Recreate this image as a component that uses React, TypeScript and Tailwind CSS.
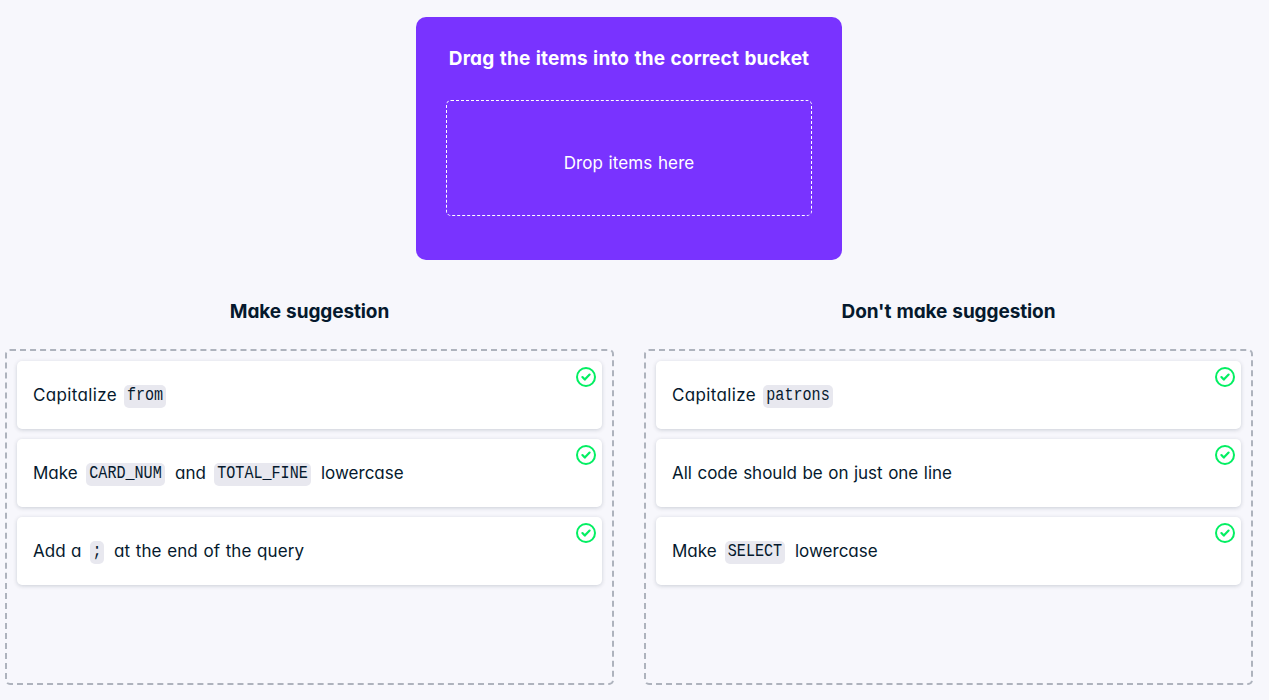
import React from "react";

type Part = { text: string; code?: boolean; className: string };

const CODE =
  "inline-flex h-[23px] items-center justify-center rounded-[5px] bg-[#e8e8ef] font-['Liberation_Mono',monospace] text-[15.1px] leading-none [word-spacing:0]";

const CheckIcon = () => (
  <svg className="absolute top-[6px] right-[6px] size-5" viewBox="0 0 20 20" fill="none" stroke="#03ef62" strokeWidth="2">
    <circle cx="10" cy="10" r="9" />
    <path d="M6.4 10.1l2.4 2.5 4.8-5" strokeWidth="2.2" strokeLinecap="round" strokeLinejoin="round" />
  </svg>
);

function Item({ parts }: { parts: Part[] }) {
  return (
    <div className="relative flex h-[68px] items-center rounded-[5px] bg-white pl-[16px] whitespace-nowrap shadow-[0_1px_4px_rgba(5,25,45,0.18)]">
      {parts.map((part) =>
        part.code ? (
          <code key={part.text} className={`${CODE} ${part.className}`}>
            <span className="inline-block scale-y-[1.17]">{part.text}</span>
          </code>
        ) : (
          <span key={part.text} className={part.className}>
            {part.text}
          </span>
        ),
      )}
      <CheckIcon />
    </div>
  );
}

function Bucket({ title, items }: { title: string; items: Part[][] }) {
  return (
    <section className="w-[609px]">
      <h2 className="flex h-[89px] items-start justify-center pt-[38px] text-[19px] leading-7 font-bold tracking-[-0.1px]">
        {title}
      </h2>
      <div className="flex h-[336px] flex-col gap-[10px] rounded-[5px] border-2 border-dashed border-[#aeb3bd] p-[10px]">
        {items.map((parts) => (
          <Item key={parts.map((p) => p.text).join(" ")} parts={parts} />
        ))}
      </div>
    </section>
  );
}

const suggestions: Part[][] = [
  [
    { text: "Capitalize", className: "w-[91px] tracking-[0.35px]" },
    { text: "from", code: true, className: "mt-[2px] w-[42px]" },
  ],
  [
    { text: "Make", className: "w-[53px]" },
    { text: "CARD_NUM", code: true, className: "mt-[2px] w-[79px]" },
    { text: "and", className: "ml-[10px] w-[39px]" },
    { text: "TOTAL_FINE", code: true, className: "mt-[2px] w-[97px]" },
    { text: "lowercase", className: "ml-[10px]" },
  ],
  [
    { text: "Add a", className: "w-[57px]" },
    { text: ";", code: true, className: "mt-[2px] w-[14px]" },
    { text: "at the end of the query", className: "ml-[10px] tracking-[0.1px]" },
  ],
];

const nonSuggestions: Part[][] = [
  [
    { text: "Capitalize", className: "w-[91px] tracking-[0.35px]" },
    { text: "patrons", code: true, className: "mt-[2px] w-[70px]" },
  ],
  [{ text: "All code should be on just one line", className: "" }],
  [
    { text: "Make", className: "w-[53px]" },
    { text: "SELECT", code: true, className: "mt-[2px] w-[60px]" },
    { text: "lowercase", className: "ml-[10px]" },
  ],
];

export default function App() {
  return (
    <main className="flex h-[700px] w-[1269px] flex-col overflow-hidden bg-[#f7f7fc] pt-[17px] pl-[5px] font-[Inter,sans-serif] text-[17px] leading-6 text-[#05192d] [font-feature-settings:'cv11'] [word-spacing:0.7px]">
      <section className="ml-[411px] h-[243px] w-[426px] rounded-[10px] bg-[#7933ff] px-[30px] pt-[28px] text-white">
        <h1 className="flex h-[55px] justify-center text-[19px] leading-7 font-bold tracking-[0.16px] whitespace-nowrap">
          Drag the items into the correct bucket
        </h1>
        <div className="flex h-[116px] items-center justify-center rounded-[5px] border border-dashed border-white pt-[9px] tracking-[0.1px]">
          Drop items here
        </div>
      </section>
      <div className="flex gap-[30px]">
        <Bucket title="Make suggestion" items={suggestions} />
        <Bucket title="Don't make suggestion" items={nonSuggestions} />
      </div>
    </main>
  );
}
